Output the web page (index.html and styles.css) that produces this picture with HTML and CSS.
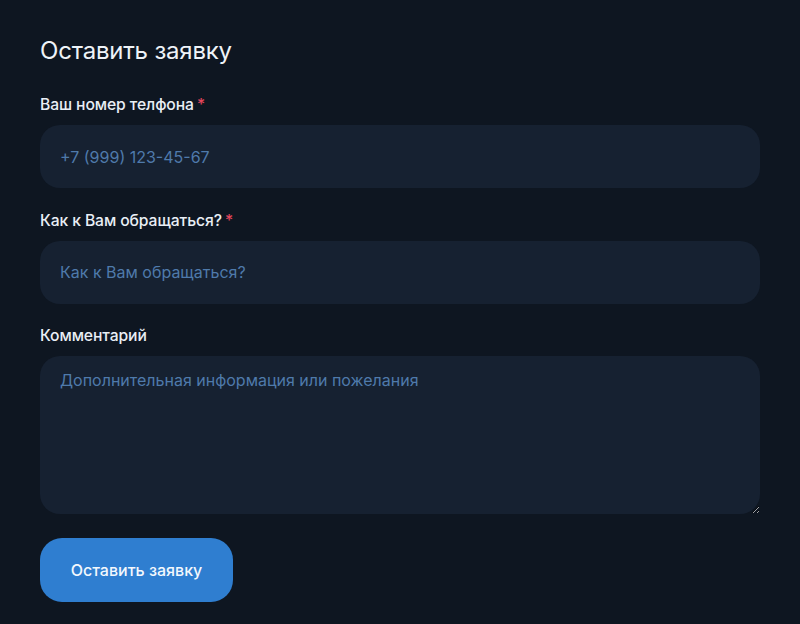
FILE: index.html
```html
<!DOCTYPE html>
<html lang="ru">
<head>
<meta charset="utf-8">
<link rel="stylesheet" href="styles.css">
</head>
<body>
<form class="card">
  <h2 class="title">Оставить заявку</h2>
  <div class="field">
    <label class="label">Ваш номер телфона<span class="req">*</span></label>
    <input class="input" type="text" placeholder="+7 (999) 123-45-67">
  </div>
  <div class="field">
    <label class="label">Как к Вам обращаться?<span class="req">*</span></label>
    <input class="input" type="text" placeholder="Как к Вам обращаться?">
  </div>
  <div class="field">
    <label class="label">Комментарий</label>
    <textarea class="input textarea" placeholder="Дополнительная информация или пожелания"></textarea>
  </div>
  <button class="btn" type="button">Оставить заявку</button>
</form>
</body>
</html>
```
FILE: styles.css
```css
html, body {
  margin: 0;
  background: #121b28;
}
body {
  font-family: Inter, "Noto Sans", sans-serif;
  color: #e9eef5;
}
.card {
  box-sizing: border-box;
  width: 800px;
  height: 624px;
  background: #0e1621;
  padding: 35px 40px 0;
  display: flex;
  flex-direction: column;
  align-items: flex-start;
}
.title {
  margin: 0 0 28px;
  font-size: 24px;
  line-height: 32px;
  font-weight: 400;
  color: #eef3f8;
  letter-spacing: -0.2px;
}
.field {
  display: flex;
  flex-direction: column;
  width: 100%;
  margin-bottom: 22.5px;
}
.label {
  font-size: 15.7px;
  line-height: 20px;
  font-weight: 500;
  margin-bottom: 10px;
  color: #e9eef5;
  letter-spacing: -0.1px;
}
.req {
  color: #e2455c;
  margin-left: 3px;
}
.input {
  box-sizing: border-box;
  width: 100%;
  height: 63px;
  border: none;
  outline: none;
  border-radius: 20px;
  background: #162131;
  padding: 0 20px;
  font-family: inherit;
  font-size: 16px;
  color: #cfe0f2;
}
.input::placeholder {
  color: #4f7aab;
  opacity: 1;
}
.textarea {
  height: 158px;
  padding: 13px 20px;
  resize: vertical;
  line-height: 22px;
  display: block;
}
.field:last-of-type {
  margin-bottom: 24px;
}
.btn {
  width: 193px;
  height: 64px;
  border: none;
  border-radius: 22px;
  background: #2f7ed0;
  color: #f3f8fd;
  font-family: inherit;
  font-size: 16px;
  font-weight: 500;
  cursor: pointer;
}
```
